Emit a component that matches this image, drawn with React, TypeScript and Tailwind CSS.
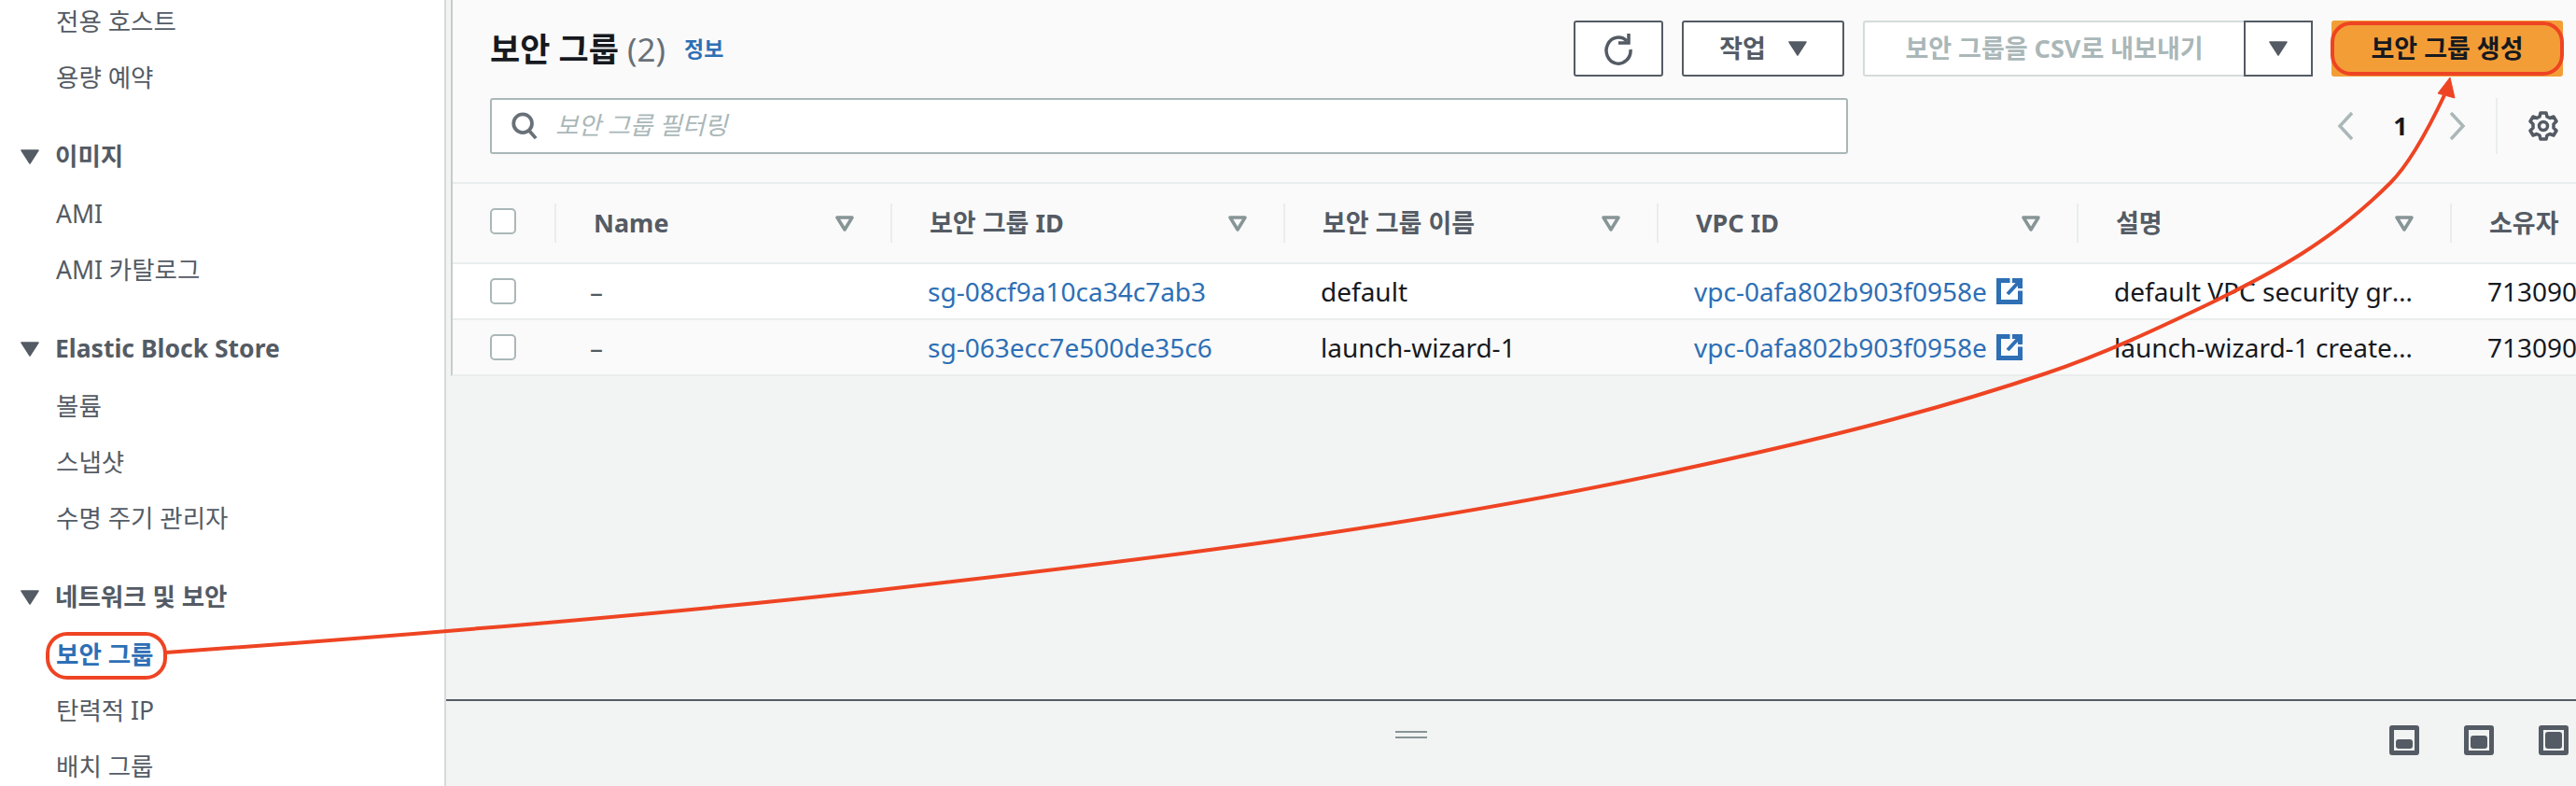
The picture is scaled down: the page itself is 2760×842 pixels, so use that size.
import React from 'react';

const sidebarGroups = [
  { title: '', items: ['전용 호스트', '용량 예약'] },
  { title: '이미지', items: ['AMI', 'AMI 카탈로그'] },
  { title: 'Elastic Block Store', items: ['볼륨', '스냅샷', '수명 주기 관리자'] },
  { title: '네트워크 및 보안', items: ['보안 그룹', '탄력적 IP', '배치 그룹'] },
];

const columns = ['Name', '보안 그룹 ID', '보안 그룹 이름', 'VPC ID', '설명', '소유자'];

const rows = [
  { id: 'sg-08cf9a10ca34c7ab3', name: 'default', desc: 'default VPC security group', bg: 'bg-white h-[60px] border-b-2 border-[#eaeded]' },
  { id: 'sg-063ecc7e500de35c6', name: 'launch-wizard-1', desc: 'launch-wizard-1 created 2023', bg: 'bg-[#fafafa] h-[58px]' },
];

const gridCols = 'grid grid-cols-[109px_360px_421px_400px_450px_400px_1fr]';

const Caret = ({ className = '' }: { className?: string }) => (
  <svg viewBox="0 0 20 16" className={className}>
    <path d="M1 1h18L10 15z" fill="#545b64" stroke="#545b64" strokeWidth="1.5" strokeLinejoin="round" />
  </svg>
);

const SortIcon = () => (
  <svg viewBox="0 0 20 17" className="block h-[17px] w-[20px]">
    <path d="M2 2h16l-8 13z" fill="none" stroke="#879596" strokeWidth="3.5" strokeLinejoin="round" />
  </svg>
);

const Checkbox = () => (
  <div className="h-[28px] w-[28px] rounded-[5px] border-2 border-[#aab7b8] bg-white" />
);

const ExternalIcon = () => (
  <svg viewBox="0 0 28 28" className="ml-[10px] h-[28px] w-[28px] shrink-0">
    <path d="M12 2.500H2.500v23h23V16" fill="none" stroke="#2e6fb5" strokeWidth="5" strokeLinecap="square" />
    <path d="M17 2.500h8.500V11" fill="none" stroke="#2e6fb5" strokeWidth="5" />
    <path d="M25 3L12 17" fill="none" stroke="#2e6fb5" strokeWidth="4" />
  </svg>
);

const PanelIcon = ({ fill }: { fill: string }) => (
  <div className="flex h-[32px] w-[32px] items-end rounded-[3px] border-[5px] border-[#545b64] bg-[#f2f3f3] p-[2px]">
    <div className={`w-full rounded-[3px] bg-[#545b64] ${fill}`} />
  </div>
);

export default function App() {
  return (
    <div className="relative flex h-[842px] w-[2760px] overflow-hidden bg-[#f2f3f3] font-['Noto_Sans','Noto_Sans_CJK_KR',sans-serif] text-[#16191f]">
      {/* sidebar */}
      <aside className="h-full w-[478px] shrink-0 overflow-hidden border-r-2 border-[#d5dbdb] bg-white text-[26.5px] text-[#545b64]">
        <div className="-mt-[6px] flex flex-col gap-[24px]">
          {sidebarGroups.map((group) => (
            <div key={group.items[0]} className="flex flex-col">
              {group.title && (
                <div className="mb-[2px] flex h-[60px] items-center font-bold">
                  <Caret className="ml-[22px] mr-[17px] h-[16px] w-[20px]" />
                  {group.title}
                </div>
              )}
              {group.items.map((item) => (
                <div key={item} className="flex h-[60px] items-center pl-[60px]">
                  {item === '보안 그룹' ? (
                    <span className="-ml-[11px] flex h-[51px] w-[130px] items-center whitespace-nowrap rounded-[23px] border-[4px] border-[#ee4423] pl-[7px] font-bold text-[#2e6fb5]">
                      {item}
                    </span>
                  ) : (
                    item
                  )}
                </div>
              ))}
            </div>
          ))}
        </div>
      </aside>

      <main className="flex min-w-0 flex-1 flex-col pl-[5px]">
        {/* security group table */}
        <section className="h-[403px] shrink-0 border-b-2 border-l-2 border-[#eaeded] border-l-[#c6cccc] bg-[#fafafa]">
          <div className="flex h-[197px] flex-col gap-[23px] border-b-2 border-[#eaeded] pl-[40px] pr-[14px] pt-[22px]">
            <div className="flex h-[60px] items-center">
              <h1 className="whitespace-nowrap text-[35px] font-bold leading-none">
                보안 그룹 <span className="font-normal text-[#687078]">(2)</span>
              </h1>
              <span className="ml-[20px] text-[23px] font-bold text-[#2e6fb5]">정보</span>
              <div className="ml-auto flex h-full text-[27px] font-bold">
                <button className="flex w-[96px] items-center justify-center rounded-[3px] border-2 border-[#545b64] bg-white">
                  <svg viewBox="0 0 32 36" className="h-[36px] w-[32px]" fill="none" stroke="#545b64" strokeWidth="3.500">
                    <path d="M25 10a13 14 0 1 0 4 9" />
                    <path d="M16 12h11V2" />
                  </svg>
                </button>
                <button className="ml-[20px] flex w-[174px] items-center justify-center gap-[24px] rounded-[3px] border-2 border-[#545b64] bg-white text-[#545b64]">
                  작업
                  <Caret className="h-[16px] w-[20px]" />
                </button>
                <button className="ml-[20px] flex w-[408px] items-center justify-center rounded-l-[3px] border-2 border-r-0 border-[#d5dbdb] bg-white text-[#aab7b8]">
                  보안 그룹을 CSV로 내보내기
                </button>
                <button className="flex w-[74px] items-center justify-center border-2 border-[#545b64] bg-white">
                  <Caret className="h-[16px] w-[20px]" />
                </button>
                <button className="ml-[20px] w-[248px] rounded-[3px] bg-[#f39d37]">
                  <span className="-mx-[1px] flex h-[58px] items-center justify-center rounded-[22px] border-[4px] border-[#ee4423]">
                    보안 그룹 생성
                  </span>
                </button>
              </div>
            </div>
            <div className="flex h-[60px] items-center">
              <div className="flex h-full w-[1455px] shrink-0 items-center rounded-[3px] border-2 border-[#aab7b8] bg-white pl-[20px]">
                <svg viewBox="0 0 32 32" className="h-[30px] w-[30px]" fill="none" stroke="#687078" strokeWidth="4">
                  <circle cx="14" cy="13" r="10.500" />
                  <path d="M21 21l8 9" />
                </svg>
                <span className="ml-[18px] text-[26.5px] italic text-[#aab7b8]">보안 그룹 필터링</span>
              </div>
              <svg viewBox="0 0 18 32" className="ml-[524px] h-[32px] w-[18px] shrink-0" fill="none" stroke="#aab7b8" strokeWidth="3.500">
                <path d="M16 2L3 16l13 14" />
              </svg>
              <span className="ml-[40px] w-[20px] shrink-0 text-center text-[27px] font-bold">1</span>
              <svg viewBox="0 0 18 32" className="ml-[42px] h-[32px] w-[18px] shrink-0" fill="none" stroke="#aab7b8" strokeWidth="3.500">
                <path d="M2 2l13 14L2 30" />
              </svg>
              <div className="ml-[32px] h-full w-[2px] shrink-0 bg-[#eaeded]" />
              <svg viewBox="0 0 32 32" className="ml-[33px] h-[32px] w-[32px] shrink-0" fill="none" stroke="#545b64" strokeWidth="3.500">
                <circle cx="16" cy="16" r="4.500" />
                <path d="M13 2h6l1 4 3 1.500 4-1.500 3 5-3 3v4l3 3-3 5-4-1.500-3 1.500-1 4h-6l-1-4-3-1.500-4 1.500-3-5 3-3v-4l-3-3 3-5 4 1.500 3-1.500z" strokeLinejoin="round" />
              </svg>
            </div>
          </div>

          <div className={`${gridCols} h-[86px] border-b-2 border-[#eaeded] pt-[21px]`}>
            <div className="pl-[40px] pt-[5px]">
              <Checkbox />
            </div>
            {columns.map((col, i) => (
              <div key={col} className="flex h-[42px] items-center border-l-2 border-[#eaeded] pl-[40px] pr-[39px] text-[27px] font-bold text-[#545b64]">
                <span className="whitespace-nowrap">{col}</span>
                {i < 5 && (
                  <span className="ml-auto">
                    <SortIcon />
                  </span>
                )}
              </div>
            ))}
          </div>

          {rows.map((row) => (
            <div key={row.id} className={`${gridCols} items-center text-[28px] ${row.bg}`}>
              <div className="pl-[40px]">
                <Checkbox />
              </div>
              <div className="pl-[38px] text-[#545b64]">–</div>
              <div className="pl-[40px] text-[#2e6fb5]">{row.id}</div>
              <div className="pl-[40px]">{row.name}</div>
              <div className="flex items-center pl-[40px] text-[#2e6fb5]">
                vpc-0afa802b903f0958e
                <ExternalIcon />
              </div>
              <div className="truncate pl-[40px] pr-[40px]">{row.desc}</div>
              <div className="overflow-hidden whitespace-nowrap pl-[40px]">713090</div>
            </div>
          ))}
        </section>

        {/* split panel */}
        <div className="flex-1" />
        <div className="-ml-[5px] flex h-[93px] shrink-0 flex-col border-t-2 border-[#545b64]">
          <div className="relative flex flex-1 items-center justify-end gap-[48px] pr-[8px] pb-[8px]">
            <div className="absolute left-[1017px] top-[32px] flex w-[34px] flex-col gap-[4px]">
              <div className="h-[2px] bg-[#879596]" />
              <div className="h-[2px] bg-[#879596]" />
            </div>
            <PanelIcon fill="h-[10px]" />
            <PanelIcon fill="h-[14px]" />
            <PanelIcon fill="h-[18px]" />
          </div>
        </div>
      </main>

      {/* annotation arrow */}
      <svg className="pointer-events-none absolute left-0 top-0" width="2760" height="842" fill="none">
        <path d="M178 699C430 681 682 661 934 633C1223 600 1512 566 1801 503C1931 475 2062 444 2192 400C2252 380 2312 352 2372 323C2435 292 2498 259 2561 196C2581 176 2600 142 2619 102" stroke="#ee4423" strokeWidth="4" />
        <path d="M2625 83L2612 100L2630 105z" fill="#ee4423" stroke="#ee4423" strokeWidth="1" />
      </svg>
    </div>
  );
}
